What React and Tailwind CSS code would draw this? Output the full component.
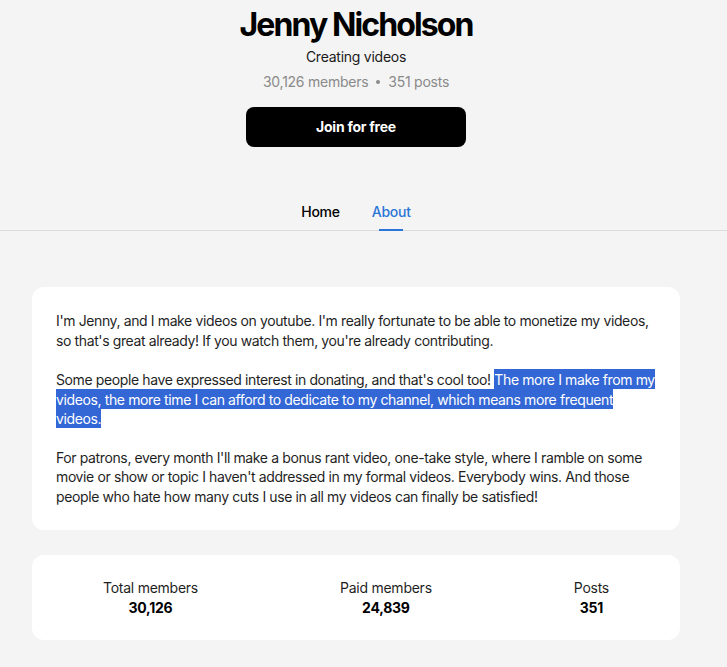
import React from 'react';

const stats = [
    { label: 'Total members', value: '30,126' },
    { label: 'Paid members', value: '24,839' },
    { label: 'Posts', value: '351' },
];

const App = () => {
    return (
        <div className="min-h-screen bg-[#f4f4f4] text-[#1a1a1a] tracking-[-0.25px]" style={{ fontFamily: 'Inter, "Noto Sans", sans-serif' }}>
            <div className="w-[712px]">
                <div className="flex flex-col items-center">
                    <h1 className="pt-[3px] text-[32px] leading-[44px] font-bold tracking-[-1.9px] text-black">Jenny Nicholson</h1>
                    <p className="text-sm leading-5 text-[#1a1a1a]">Creating videos</p>
                    <div className="mt-[5px] flex items-center gap-2 text-sm leading-5 text-[#8a8a8a]">
                        <span>30,126 members</span>
                        <span className="w-[4px] h-[4px] rounded-full bg-[#8a8a8a]"></span>
                        <span>351 posts</span>
                    </div>
                    <button className="mt-[15px] w-[220px] h-[40px] rounded-lg bg-black text-white text-sm font-bold">
                        Join for free
                    </button>
                    <div className="mt-[55px] flex gap-8 text-sm font-medium leading-5">
                        <div className="flex flex-col items-center">
                            <span className="text-black pb-[7px]">Home</span>
                            <span className="h-[2px] w-[24px]"></span>
                        </div>
                        <div className="flex flex-col items-center">
                            <span className="text-[#2b74d8] pb-[7px]">About</span>
                            <span className="h-[2px] w-[24px] bg-[#2b74d8]"></span>
                        </div>
                    </div>
                </div>
            </div>
            <div className="h-px bg-[#dcdcdc] -mt-px"></div>
            <div className="w-[712px] px-8 pt-[56px] pb-8 flex flex-col gap-[25px]">
                <div className="bg-white rounded-xl p-6 text-sm leading-[19.5px] tracking-[-0.38px] text-[#1f1f1f] space-y-[19.5px]">
                    <p>
                        I'm Jenny, and I make videos on youtube. I'm really fortunate to be able to monetize my videos, so that's great already! If you watch them, you're already contributing.
                    </p>
                    <p>
                        Some people have expressed interest in donating, and that's cool too!{' '}
                        <span className="bg-[#3367d6] text-white py-[1.5px]">
                            The more I make from my videos, the more time I can afford to dedicate to my channel, which means more frequent videos.
                        </span>
                    </p>
                    <p>
                        For patrons, every month I'll make a bonus rant video, one-take style, where I ramble on some movie or show or topic I haven't addressed in my formal videos. Everybody wins. And those people who hate how many cuts I use in all my videos can finally be satisfied!
                    </p>
                </div>
                <div className="bg-white rounded-xl h-[85px] flex items-center justify-around">
                    {stats.map(s => (
                        <div key={s.label} className="flex flex-col items-center text-sm leading-5">
                            <span className="text-[#1f1f1f]">{s.label}</span>
                            <span className="font-bold text-black">{s.value}</span>
                        </div>
                    ))}
                </div>
            </div>
        </div>
    );
};

export default App;
